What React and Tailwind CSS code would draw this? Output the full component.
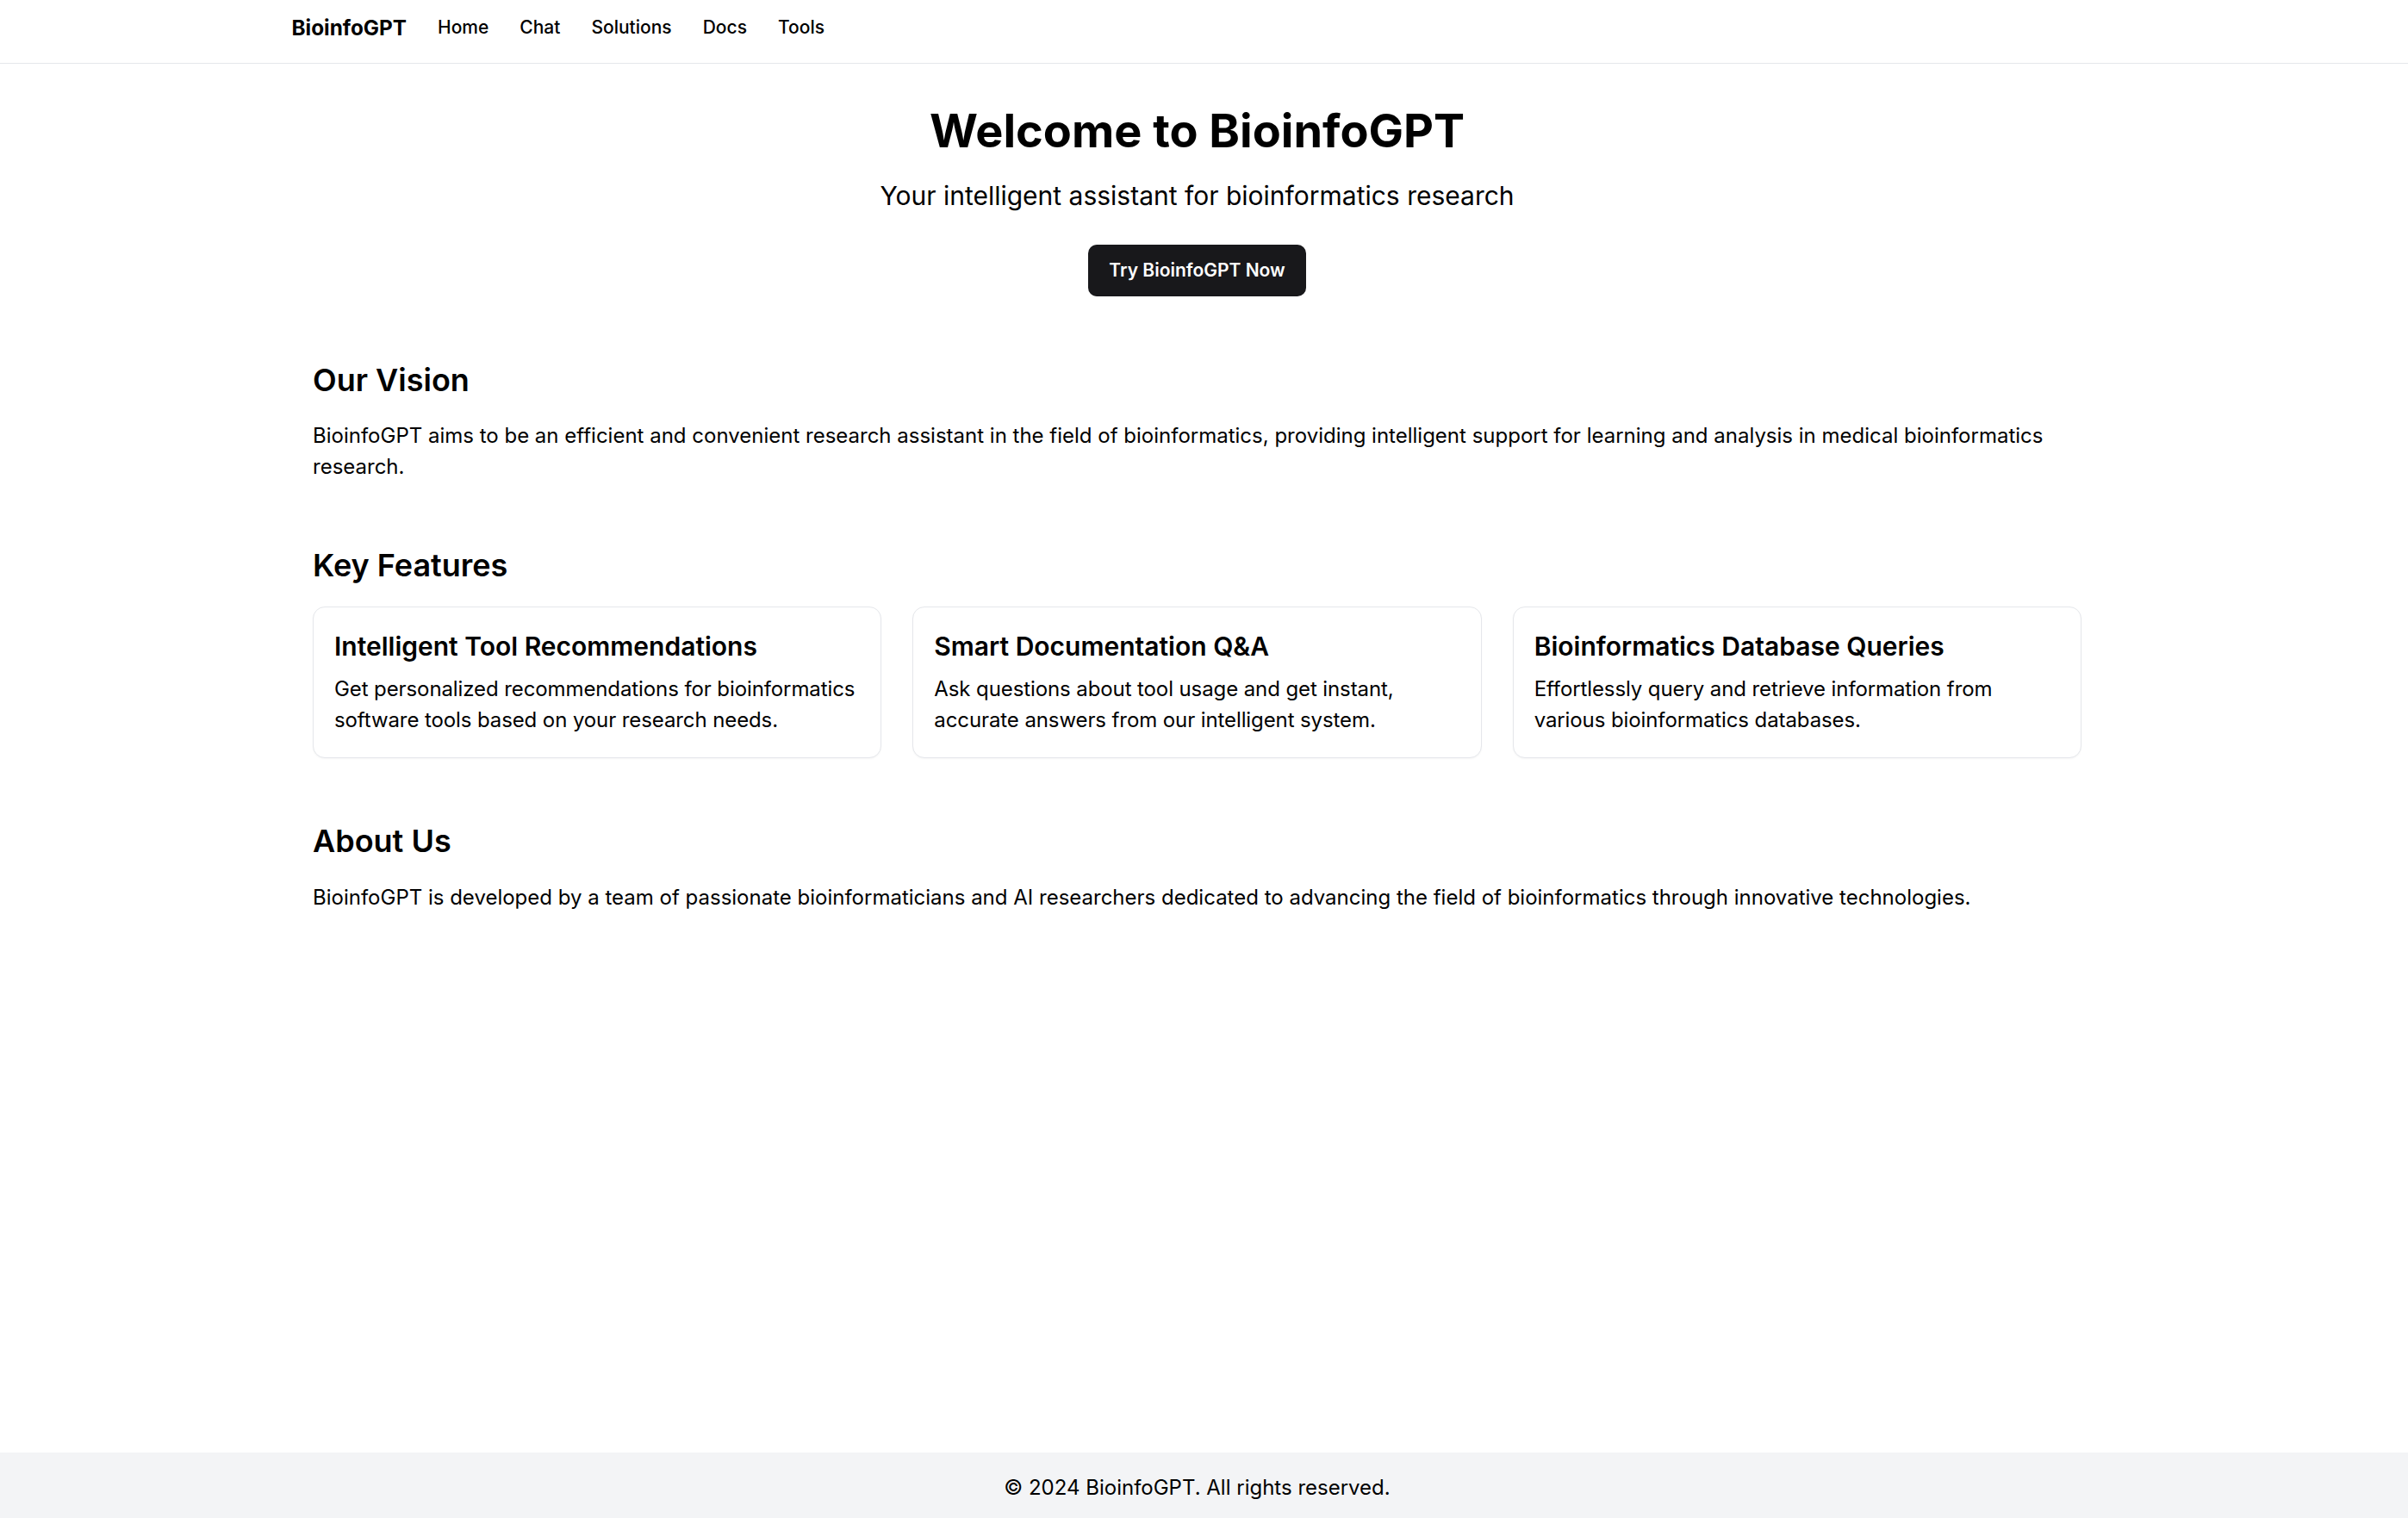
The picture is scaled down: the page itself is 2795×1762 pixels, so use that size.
import React from "react";

const features = [
  {
    title: "Intelligent Tool Recommendations",
    body: "Get personalized recommendations for bioinformatics software tools based on your research needs.",
  },
  {
    title: "Smart Documentation Q&A",
    body: "Ask questions about tool usage and get instant, accurate answers from our intelligent system.",
  },
  {
    title: "Bioinformatics Database Queries",
    body: "Effortlessly query and retrieve information from various bioinformatics databases.",
  },
];

export default function App() {
  return (
    <div
      className="min-h-[1762px] flex flex-col bg-white text-black"
      style={{ fontFamily: "Inter, 'Noto Sans', sans-serif" }}
    >
      <header className="border-b border-[#e5e7eb] pr-[16px]">
        <nav className="mx-auto w-[2102px] pt-[14px] pb-[23px] flex items-center gap-[36px] leading-[36px]">
          <span className="font-bold text-[24.3px]">BioinfoGPT</span>
          <a className="text-[21px] font-medium">Home</a>
          <a className="text-[21px] font-medium">Chat</a>
          <a className="text-[21px] font-medium">Solutions</a>
          <a className="text-[21px] font-medium">Docs</a>
          <a className="text-[21px] font-medium">Tools</a>
        </nav>
      </header>

      <main className="flex-1 pr-[16px]">
        <div className="mx-auto w-[2053px]">
          <section className="pt-[46px] flex flex-col items-center text-center">
            <h1 className="text-[54px] leading-[64px] font-bold">Welcome to BioinfoGPT</h1>
            <p className="mt-[18px] text-[30px] leading-[50px]">
              Your intelligent assistant for bioinformatics research
            </p>
            <button className="mt-[32px] h-[60px] px-[24px] rounded-[10px] bg-[#18181b] text-white text-[21px] font-semibold">
              Try BioinfoGPT Now
            </button>
          </section>

          <section className="mt-[72px]">
            <h2 className="text-[36px] leading-[50px] font-semibold">Our Vision</h2>
            <p className="mt-[22px] text-[24px] leading-[35.65px]">
              BioinfoGPT aims to be an efficient and convenient research assistant in the field of
              bioinformatics, providing intelligent support for learning and analysis in medical
              bioinformatics research.
            </p>
          </section>

          <section className="mt-[72px]">
            <h2 className="text-[36px] leading-[50px] font-semibold">Key Features</h2>
            <div className="mt-[23px] grid grid-cols-3 gap-[36px]">
              {features.map((f) => (
                <div
                  key={f.title}
                  className="rounded-[14px] border border-[#e5e7eb] bg-white py-[25px] px-[24px] shadow-[0_1px_2px_rgba(0,0,0,0.04)]"
                >
                  <h3 className="text-[30px] leading-[40px] font-semibold">{f.title}</h3>
                  <p className="mt-[12px] text-[24px] leading-[35.65px] tracking-[-0.1px]">{f.body}</p>
                </div>
              ))}
            </div>
          </section>

          <section className="mt-[71px]">
            <h2 className="text-[36px] leading-[50px] font-semibold">About Us</h2>
            <p className="mt-[23px] text-[24px] leading-[35.65px]">
              BioinfoGPT is developed by a team of passionate bioinformaticians and AI researchers
              dedicated to advancing the field of bioinformatics through innovative technologies.
            </p>
          </section>
        </div>
      </main>

      <footer className="bg-[#f3f4f6]">
        <div className="pr-[16px] pt-[23px] pb-[17px] text-center text-[24px] leading-[35.65px]">
          © 2024 BioinfoGPT. All rights reserved.
        </div>
      </footer>
    </div>
  );
}
